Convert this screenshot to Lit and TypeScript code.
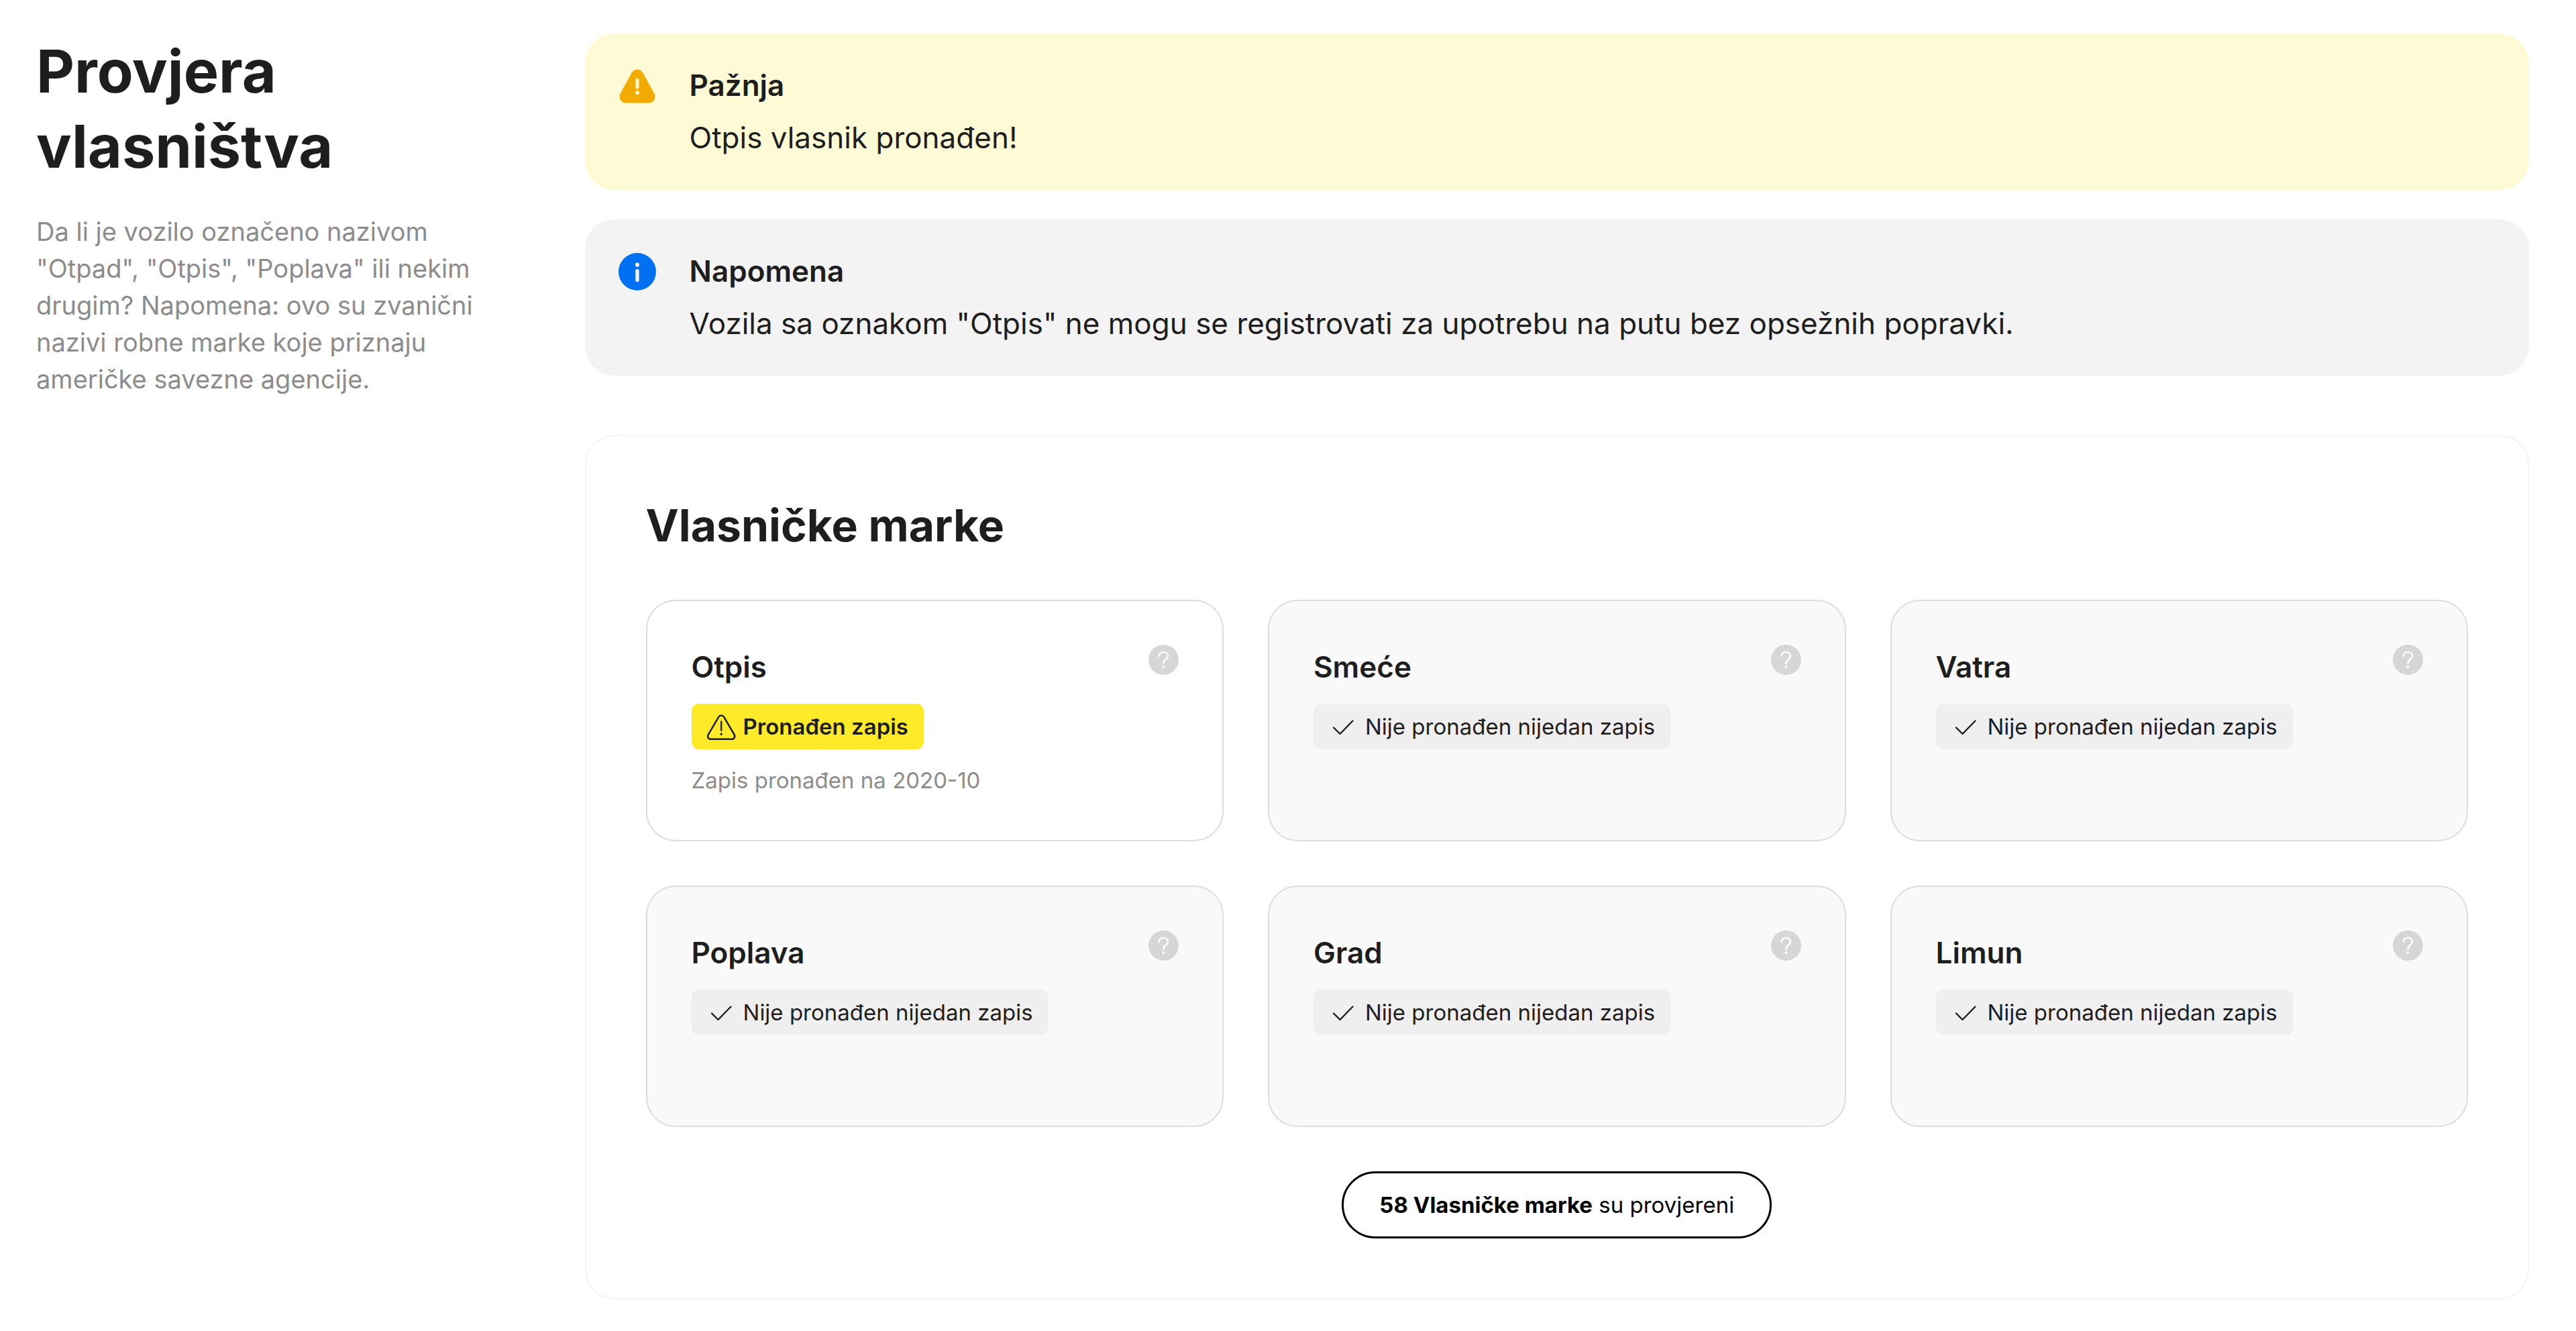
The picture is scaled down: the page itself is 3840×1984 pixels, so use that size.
import { LitElement, html, css, svg } from "lit";
import { customElement, property } from "lit/decorators.js";

interface Brand {
  name: string;
  foundOn?: string;
}

const brands: Brand[] = [
  { name: "Otpis", foundOn: "2020-10" },
  { name: "Smeće" },
  { name: "Vatra" },
  { name: "Poplava" },
  { name: "Grad" },
  { name: "Limun" },
];

const alertTriangle = svg`
  <path d="M33 18 L16 49 H50 Z" fill="#f2ab00" stroke="#f2ab00" stroke-width="19" stroke-linejoin="round"/>
  <path d="M33 24 V35" stroke="#fffad6" stroke-width="5" stroke-linecap="round"/>
  <circle cx="33" cy="43.3" r="2.9" fill="#fffad6"/>`;

const infoCircle = svg`
  <circle cx="33" cy="33" r="28" fill="#0071f2"/>
  <circle cx="33" cy="22.7" r="3.1" fill="#f3f3f3"/>
  <path d="M33 31.8 V45.5" stroke="#f3f3f3" stroke-width="5.4" stroke-linecap="round"/>`;

@customElement("notice-box")
export class NoticeBox extends LitElement {
  @property() tone: "warning" | "info" = "info";
  @property() heading = "";
  @property() message = "";

  static styles = css`
    :host {
      display: block;
    }
    .box {
      display: flex;
      align-items: flex-start;
      gap: 45px;
      padding: 38px 45px 39px;
      border-radius: 44px;
      background: #f3f3f3;
      color: #1e1e1e;
      font-size: 44px;
      line-height: 78px;
    }
    .warning {
      background: #fffad6;
    }
    .icon {
      flex: none;
      width: 66px;
      height: 80px;
    }
    .heading,
    .message {
      margin: 0;
      font-size: inherit;
    }
    .heading {
      font-weight: 600;
    }
  `;

  render() {
    return html`
      <section class="box ${this.tone}">
        <svg class="icon" viewBox="0 0 66 66" fill="none" aria-hidden="true">
          ${this.tone === "warning" ? alertTriangle : infoCircle}
        </svg>
        <div>
          <h2 class="heading">${this.heading}</h2>
          <p class="message">${this.message}</p>
        </div>
      </section>
    `;
  }
}

@customElement("brand-card")
export class BrandCard extends LitElement {
  @property({ attribute: false }) brand!: Brand;

  static styles = css`
    :host {
      display: grid;
    }
    .card {
      display: flex;
      justify-content: space-between;
      align-items: flex-start;
      gap: 22px;
      padding: 65px 65px 65px 66px;
      border: 2px solid #dcdcdc;
      border-radius: 44px;
      background: #f9f9f9;
      color: #1e1e1e;
    }
    .found {
      background: #ffffff;
    }
    .body {
      display: flex;
      flex-direction: column;
      align-items: flex-start;
      gap: 22px;
    }
    .name {
      margin: 0;
      font-size: 44px;
      line-height: 66px;
      font-weight: 600;
    }
    .badge {
      display: flex;
      align-items: center;
      gap: 11px;
      padding: 10px 23px 10px 22px;
      border-radius: 11px;
      background: #efefef;
      font-size: 33px;
      line-height: 48px;
    }
    .found .badge {
      background: #ffea29;
      font-weight: 600;
    }
    .mark {
      flex: none;
      width: 44px;
      height: 44px;
    }
    .date {
      margin: 0;
      color: #8c8c8c;
      font-size: 33px;
      line-height: 48px;
    }
    .help {
      flex: none;
      display: block;
      width: 45px;
      height: 45px;
      padding: 0;
      border: 0;
      border-radius: 50%;
      background: #d6d6d6;
      cursor: pointer;
    }
    .help-icon {
      display: block;
      width: 100%;
      height: 100%;
    }
  `;

  render() {
    const { name, foundOn } = this.brand;
    return html`
      <article class="card ${foundOn ? "found" : ""}">
        <div class="body">
          <h3 class="name">${name}</h3>
          <div class="badge">
            <svg class="mark" viewBox="0 0 44 44" fill="none" stroke="#1e1e1e" stroke-linecap="round" stroke-linejoin="round" aria-hidden="true">
              ${foundOn
                ? svg`
                    <path stroke-width="2.5" d="M18.3 7.6 C20 4.8 24.4 4.8 26.1 7.6 L41.6 34 C43.4 37.2 41.4 40.8 37.8 40.8 H6.6 C3 40.8 1 37.2 2.8 34 Z"/>
                    <path stroke-width="2.3" d="M22.2 14.4 V28"/>
                    <circle cx="22.2" cy="33.2" r="1.7" fill="#1e1e1e" stroke="none"/>`
                : svg`<path stroke-width="2.4" d="M8 23.5 L17.5 33 L36.5 13.5"/>`}
            </svg>
            <span>${foundOn ? "Pronađen zapis" : "Nije pronađen nijedan zapis"}</span>
          </div>
          <p class="date">${foundOn ? `Zapis pronađen na ${foundOn}` : html`&nbsp;`}</p>
        </div>
        <button class="help" type="button" aria-label=${name}>
          <svg class="help-icon" viewBox="0 0 45 45" fill="none" aria-hidden="true">
            <path d="M15.9 17 C15.9 13.2 18.6 11 22.5 11 C26.4 11 29 13.4 29 16.7 C29 21.4 22.4 21.8 22.4 28" stroke="#ffffff" stroke-width="2.6" stroke-linecap="round"/>
            <circle cx="22.4" cy="33" r="2" fill="#ffffff"/>
          </svg>
        </button>
      </article>
    `;
  }
}

@customElement("app-root")
export class AppRoot extends LitElement {
  static styles = css`
    :host {
      display: block;
      background: #ffffff;
      color: #1e1e1e;
      font-family: Inter, "Liberation Sans", sans-serif;
    }
    .page {
      display: grid;
      grid-template-columns: 22fr 78fr;
      align-items: start;
      padding: 50px 70px 46px 54px;
    }
    .intro {
      display: flex;
      flex-direction: column;
      gap: 44px;
      padding-right: 110px;
    }
    .title {
      margin: 0;
      font-size: 88px;
      line-height: 112px;
      font-weight: 700;
    }
    .lead {
      margin: 0;
      color: #8c8c8c;
      font-size: 38px;
      line-height: 55px;
    }
    .main {
      display: flex;
      flex-direction: column;
      gap: 88px;
      min-width: 0;
    }
    .notices {
      display: flex;
      flex-direction: column;
      gap: 44px;
    }
    .panel {
      display: flex;
      flex-direction: column;
      gap: 66px;
      padding: 89px;
      border: 2px solid #f3f3f3;
      border-radius: 44px;
    }
    .panel-title {
      margin: 0;
      font-size: 66px;
      line-height: 89px;
      font-weight: 700;
    }
    .brands {
      display: grid;
      grid-template-columns: repeat(3, minmax(0, 1fr));
      gap: 66px;
    }
    .total {
      align-self: center;
      margin: 0;
      padding: 23px 53px;
      border: 3px solid #000000;
      border-radius: 50px;
      color: #000000;
      font-size: 33px;
      line-height: 48px;
    }
    .count {
      font-weight: 700;
    }
    @media (max-width: 2200px) {
      .page {
        grid-template-columns: minmax(0, 1fr);
        row-gap: 66px;
      }
      .brands {
        grid-template-columns: minmax(0, 1fr);
      }
    }
  `;

  render() {
    return html`
      <div class="page">
        <header class="intro">
          <h1 class="title">Provjera vlasništva</h1>
          <p class="lead">
            Da li je vozilo označeno nazivom "Otpad", "Otpis", "Poplava" ili nekim drugim? Napomena:
            ovo su zvanični nazivi robne marke koje priznaju američke savezne agencije.
          </p>
        </header>
        <main class="main">
          <div class="notices">
            <notice-box tone="warning" heading="Pažnja" message="Otpis vlasnik pronađen!"></notice-box>
            <notice-box
              tone="info"
              heading="Napomena"
              message='Vozila sa oznakom "Otpis" ne mogu se registrovati za upotrebu na putu bez opsežnih popravki.'
            ></notice-box>
          </div>
          <section class="panel">
            <h2 class="panel-title">Vlasničke marke</h2>
            <div class="brands">
              ${brands.map((brand) => html`<brand-card .brand=${brand}></brand-card>`)}
            </div>
            <p class="total"><strong class="count">58 Vlasničke marke</strong> su provjereni</p>
          </section>
        </main>
      </div>
    `;
  }
}
